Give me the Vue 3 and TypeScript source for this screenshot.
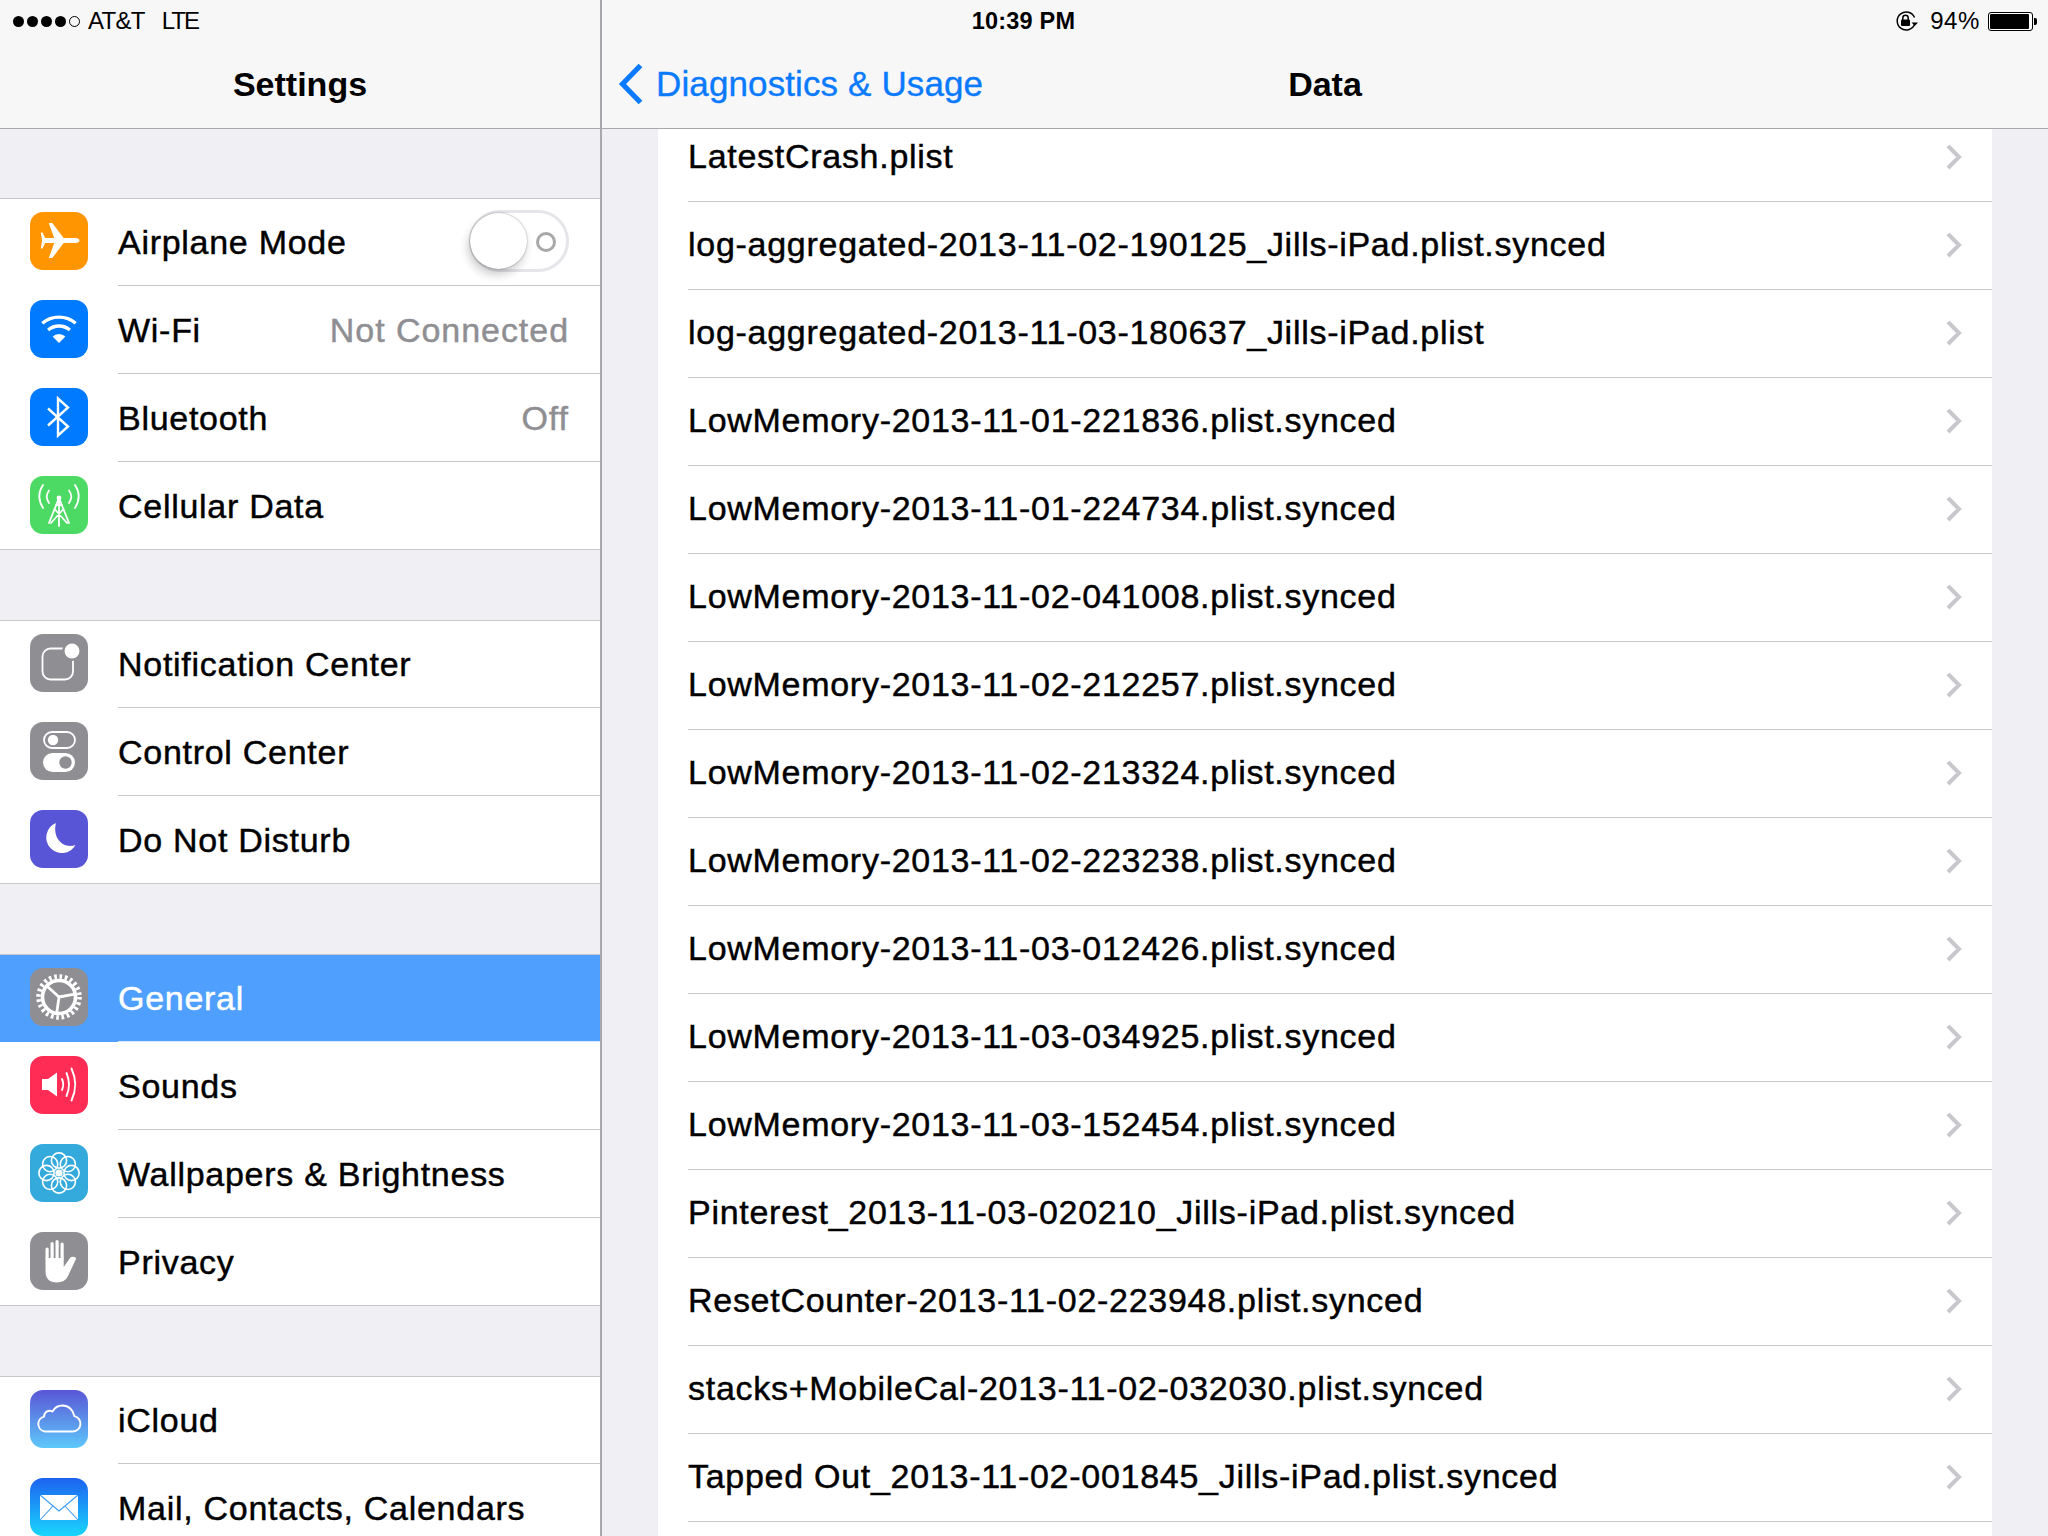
<script setup lang="ts">
interface Row {
  id: string
  label: string
  value?: string
  toggle?: boolean
  selected?: boolean
}

const groups: Row[][] = [
  [
    { id: 'airplane', label: 'Airplane Mode', toggle: true },
    { id: 'wifi', label: 'Wi-Fi', value: 'Not Connected' },
    { id: 'bluetooth', label: 'Bluetooth', value: 'Off' },
    { id: 'cellular', label: 'Cellular Data' },
  ],
  [
    { id: 'notification', label: 'Notification Center' },
    { id: 'control', label: 'Control Center' },
    { id: 'dnd', label: 'Do Not Disturb' },
  ],
  [
    { id: 'general', label: 'General', selected: true },
    { id: 'sounds', label: 'Sounds' },
    { id: 'wallpaper', label: 'Wallpapers & Brightness' },
    { id: 'privacy', label: 'Privacy' },
  ],
  [
    { id: 'icloud', label: 'iCloud' },
    { id: 'mail', label: 'Mail, Contacts, Calendars' },
  ],
]

const files: string[] = [
  'LatestCrash.plist',
  'log-aggregated-2013-11-02-190125_Jills-iPad.plist.synced',
  'log-aggregated-2013-11-03-180637_Jills-iPad.plist',
  'LowMemory-2013-11-01-221836.plist.synced',
  'LowMemory-2013-11-01-224734.plist.synced',
  'LowMemory-2013-11-02-041008.plist.synced',
  'LowMemory-2013-11-02-212257.plist.synced',
  'LowMemory-2013-11-02-213324.plist.synced',
  'LowMemory-2013-11-02-223238.plist.synced',
  'LowMemory-2013-11-03-012426.plist.synced',
  'LowMemory-2013-11-03-034925.plist.synced',
  'LowMemory-2013-11-03-152454.plist.synced',
  'Pinterest_2013-11-03-020210_Jills-iPad.plist.synced',
  'ResetCounter-2013-11-02-223948.plist.synced',
  'stacks+MobileCal-2013-11-02-032030.plist.synced',
  'Tapped Out_2013-11-02-001845_Jills-iPad.plist.synced',
]

const petals = [0, 45, 90, 135, 180, 225, 270, 315]
const spokes = [-48, 80, 188]
</script>

<template>
  <div class="screen">
    <div class="status">
      <div class="status-left">
        <span class="dots">
          <i class="dot"></i><i class="dot"></i><i class="dot"></i><i class="dot"></i><i class="dot empty"></i>
        </span>
        <span class="carrier">AT&amp;T</span>
        <span class="network">LTE</span>
      </div>
      <div class="time">10:39 PM</div>
      <div class="status-right">
        <svg class="lock" width="24" height="20" viewBox="0 0 24 20">
          <path d="M19.5 6.5A9 9 0 1 0 19.5 13.5" fill="none" stroke="#000" stroke-width="1.5" />
          <path d="M16.5 11.5h6.5l-3.2 3.6z" fill="#000" />
          <rect x="6" y="8.5" width="9" height="6.5" rx="1" fill="#000" />
          <path d="M7.8 9V7a2.7 2.7 0 0 1 5.4 0v2" fill="none" stroke="#000" stroke-width="1.5" />
        </svg>
        <span class="pct">94%</span>
        <span class="battery"><i class="battery-fill"></i></span>
        <i class="nub"></i>
      </div>
    </div>

    <aside class="master">
      <header class="nav nav-master"><h1 class="title">Settings</h1></header>
      <div class="master-scroll">
        <section v-for="(group, g) in groups" :key="g" class="group">
          <div v-for="row in group" :key="row.id" class="row" :class="{ selected: row.selected }">
            <span class="icon" :class="'icon-' + row.id">
              <svg width="58" height="58" viewBox="0 0 58 58">
                <template v-if="row.id === 'airplane'">
                  <path d="M49.5 28.5c0-1.4-1.8-2.4-4-2.4H33.6L22.3 11h-3.5l5.4 15.1h-9l-2.7-5.7h-1.7l1.3 8.1-1.3 8.1h1.7l2.7-5.7h9L18.8 46h3.5l11.3-15.1h11.9c2.2 0 4-1 4-2.4z" fill="#fff" />
                </template>
                <template v-else-if="row.id === 'wifi'">
                  <path d="M12.3 23.2A26 26 0 0 1 45.7 23.2" fill="none" stroke="#fff" stroke-width="3.4" />
                  <path d="M18.1 30A17 17 0 0 1 39.9 30" fill="none" stroke="#fff" stroke-width="3.4" />
                  <path d="M29 43L22.6 36.6A9 9 0 0 1 35.4 36.6Z" fill="#fff" />
                </template>
                <template v-else-if="row.id === 'bluetooth'">
                  <path d="M18 20.5L38 38.5 28 47.5V10.5L38 19.5 18 37.5" fill="none" stroke="#fff" stroke-width="2.4" />
                </template>
                <template v-else-if="row.id === 'cellular'">
                  <g fill="none" stroke="#fff" stroke-width="1.8" stroke-linecap="round">
                    <path d="M13 9Q5.5 20 13 32M45 9Q52.5 20 45 32" />
                    <path d="M19 14.5Q14.5 20.5 19 27M39 14.5Q43.5 20.5 39 27" />
                    <path d="M29 22L19 47M29 22L39 47M29 22V50M24.5 33L37 47M33.5 33L21 47M26 29H32" />
                  </g>
                  <circle cx="29" cy="22" r="2.4" fill="#fff" />
                </template>
                <template v-else-if="row.id === 'notification'">
                  <rect x="12.5" y="14.5" width="30.5" height="31" rx="8" fill="none" stroke="#fff" stroke-width="1.8" />
                  <circle cx="42" cy="17" r="10" fill="#8e8e93" />
                  <circle cx="42" cy="17" r="7.5" fill="#fff" />
                </template>
                <template v-else-if="row.id === 'control'">
                  <rect x="14" y="10" width="31" height="16" rx="8" fill="none" stroke="#fff" stroke-width="1.8" />
                  <circle cx="23" cy="18" r="5.2" fill="#fff" />
                  <rect x="13" y="31" width="32" height="19" rx="9.5" fill="#fff" />
                  <circle cx="35.5" cy="40.5" r="6.2" fill="#8e8e93" />
                </template>
                <template v-else-if="row.id === 'dnd'">
                  <path d="M26 13A15.6 15.6 0 1 0 45.5 35C33.5 39.5 22 28 26 13Z" fill="#fff" />
                </template>
                <template v-else-if="row.id === 'general'">
                  <circle cx="29" cy="29" r="20.5" fill="none" stroke="#fff" stroke-width="4.6" stroke-dasharray="2.68 2.68" />
                  <circle cx="29" cy="29" r="16.5" fill="none" stroke="#fff" stroke-width="3.6" />
                  <line v-for="a in spokes" :key="a" x1="29" y1="29" x2="29" y2="13" stroke="#fff" stroke-width="2.8" :transform="`rotate(${a} 29 29)`" />
                </template>
                <template v-else-if="row.id === 'sounds'">
                  <path d="M12 23H18L27 16.5V40.5L18 34H12Z" fill="#fff" />
                  <g fill="none" stroke="#fff" stroke-width="1.9" stroke-linecap="round">
                    <path d="M32 23Q34.5 28.5 32 34" />
                    <path d="M36.5 17Q41.5 28.5 36.5 40" />
                    <path d="M41.5 12.5Q49 28.5 41.5 44.5" />
                  </g>
                </template>
                <template v-else-if="row.id === 'wallpaper'">
                  <g fill="none" stroke="#fff" stroke-width="1.6">
                    <circle v-for="a in petals" :key="a" cx="29" cy="16.5" r="7.6" :transform="`rotate(${a} 29 29)`" />
                  </g>
                  <circle cx="29" cy="29" r="3.6" fill="#fff" />
                </template>
                <template v-else-if="row.id === 'privacy'">
                  <path d="M15.5 27V17a1.6 1.6 0 0 1 3.2 0V27zM20.5 27V11.5a1.6 1.6 0 0 1 3.2 0V27zM25.5 27V9.5a1.6 1.6 0 0 1 3.2 0V27zM30.5 27V12a1.6 1.6 0 0 1 3.2 0V27z" fill="#fff" />
                  <path d="M15.5 26H33.7V35L40 26Q42 24 45.5 25.5 46.5 26.5 45.5 28L38 44Q35 50.5 27 50.5 15.5 50.5 15.5 39Z" fill="#fff" />
                </template>
                <template v-else-if="row.id === 'icloud'">
                  <path d="M15 41.5H43a7.8 7.8 0 0 0 1.4-15.4C43.2 20 38.5 15.5 32.5 15.5 27.8 15.5 24.5 18 22.5 21.5 19 19.5 14.3 21.5 14 26.6A7.6 7.6 0 0 0 15 41.5Z" fill="none" stroke="#fff" stroke-width="1.9" />
                </template>
                <template v-else-if="row.id === 'mail'">
                  <rect x="10" y="17" width="38" height="25" fill="#fff" />
                  <path d="M10 17L29 33 48 17M10 42L23 28M48 42L35 28" fill="none" stroke="#3a9cf8" stroke-width="1.1" />
                </template>
              </svg>
            </span>
            <div class="row-body">
              <span class="label">{{ row.label }}</span>
              <span v-if="row.value" class="value">{{ row.value }}</span>
              <span v-if="row.toggle" class="switch">
                <i class="switch-off"></i>
                <i class="knob"></i>
              </span>
            </div>
          </div>
        </section>
      </div>
    </aside>

    <main class="detail">
      <header class="nav nav-detail">
        <div class="back">
          <svg class="back-chevron" width="26" height="42" viewBox="0 0 26 42">
            <path d="M22.5 2.5L4.5 21 22.5 39.5" fill="none" stroke="#0a7aff" stroke-width="5.2" />
          </svg>
          <span class="back-text">Diagnostics &amp; Usage</span>
        </div>
        <h1 class="title">Data</h1>
        <div></div>
      </header>
      <div class="detail-scroll">
        <ul class="files">
          <li v-for="file in files" :key="file" class="file">
            <span class="file-name">{{ file }}</span>
            <svg class="chevron" width="18" height="26" viewBox="0 0 18 26">
              <path d="M3 2L14 13 3 24" fill="none" stroke="#c7c7cc" stroke-width="4" />
            </svg>
          </li>
          <li class="file"></li>
        </ul>
      </div>
    </main>
  </div>
</template>

<style scoped>
.screen {
  position: relative;
  display: flex;
  width: 2048px;
  height: 1536px;
  overflow: hidden;
  background: #efeff4;
  color: #000;
  font-family: "Liberation Sans", Arial, sans-serif;
}
.status {
  position: absolute;
  inset: 0 0 auto 0;
  height: 42px;
  display: grid;
  grid-template-columns: 1fr auto 1fr;
  align-items: center;
  font-size: 24px;
}
.status-left {
  display: flex;
  align-items: center;
  padding-left: 13px;
}
.dots {
  display: flex;
  gap: 3px;
  margin-right: 8px;
}
.dot {
  width: 11px;
  height: 11px;
  border-radius: 50%;
  background: #000;
}
.dot.empty {
  background: transparent;
  border: 1px solid #000;
  box-sizing: border-box;
}
.carrier {
  letter-spacing: -0.7px;
}
.network {
  margin-left: 17px;
  letter-spacing: -2px;
}
.time {
  font-weight: 700;
  font-size: 23.5px;
  letter-spacing: 0.2px;
  padding-right: 1px;
}
.status-right {
  display: flex;
  align-items: center;
  justify-content: flex-end;
  padding-right: 11px;
}
.pct {
  margin-left: 11px;
  font-size: 24px;
  letter-spacing: 0.6px;
}
.battery {
  display: block;
  width: 45px;
  height: 19px;
  margin-left: 8px;
  box-sizing: border-box;
  border: 1px solid #000;
  border-radius: 3px;
  padding: 1px;
  background: #fff;
}
.battery-fill {
  display: block;
  height: 100%;
  width: 94%;
  background: #000;
  border-radius: 1px;
}
.nub {
  display: block;
  width: 3px;
  height: 7px;
  margin-left: 1px;
  background: #000;
  border-radius: 0 2px 2px 0;
}

.nav {
  height: 129px;
  flex: none;
  box-sizing: border-box;
  padding-top: 40px;
  background: #f7f7f7;
  border-bottom: 1px solid #a9a9ac;
}
.nav-master {
  display: flex;
  align-items: center;
  justify-content: center;
}
.nav-detail {
  display: grid;
  grid-template-columns: 1fr auto 1fr;
  align-items: center;
}
.title {
  margin: 0;
  font-size: 34px;
  font-weight: 700;
}
.back {
  display: flex;
  align-items: center;
  padding-left: 16px;
  color: #0a7aff;
  font-size: 35px;
  letter-spacing: 0.12px;
  -webkit-text-stroke: 0.35px #0a7aff;
}
.back-chevron {
  margin-right: 12px;
}

.master {
  width: 600px;
  flex: none;
  display: flex;
  flex-direction: column;
  border-right: 2px solid #a7a7ac;
}
.master-scroll {
  flex: 1;
  overflow: hidden;
  padding-top: 69px;
}
.group {
  background: #fff;
  border-top: 1px solid #c8c7cc;
  border-bottom: 1px solid #c8c7cc;
  margin-bottom: 70px;
}
.row {
  height: 88px;
  box-sizing: border-box;
  display: flex;
  align-items: center;
  padding-left: 30px;
  font-size: 34px;
  letter-spacing: 0.72px;
  -webkit-text-stroke: 0.45px currentColor;
}
.row:first-child {
  height: 86px;
  padding-bottom: 2px;
}
.label,
.value {
  padding-top: 2px;
}
.icon {
  width: 58px;
  height: 58px;
  flex: none;
  border-radius: 13px;
  overflow: hidden;
  display: block;
}
.icon svg {
  display: block;
}
.icon-airplane { background: #ff9500; }
.icon-wifi, .icon-bluetooth { background: #007aff; }
.icon-cellular { background: #4cd964; }
.icon-notification, .icon-control, .icon-general, .icon-privacy { background: #8e8e93; }
.icon-dnd { background: #5856d6; }
.icon-sounds { background: #ff2d55; }
.icon-wallpaper { background: #34aadc; }
.icon-icloud { background: linear-gradient(#5a56d6, #5ec8fb); }
.icon-mail { background: linear-gradient(#1d62f0, #19d6fd); }

.row-body {
  flex: 1;
  align-self: stretch;
  min-width: 0;
  margin-left: 30px;
  padding-right: 31px;
  display: flex;
  align-items: center;
  justify-content: space-between;
}
.row + .row .row-body {
  border-top: 1px solid #c8c7cc;
}
.value {
  color: #8e8e93;
  letter-spacing: 0.95px;
}
.row.selected {
  background: #4f9fff;
  color: #fff;
  box-shadow: 0 1px 0 #4f9fff;
}
.row.selected + .row .row-body {
  border-top-color: #d6e6fb;
}
.switch {
  position: relative;
  display: block;
  width: 100px;
  height: 62px;
  box-sizing: border-box;
  border: 3px solid #e5e5ea;
  border-radius: 31px;
}
.knob {
  position: absolute;
  left: -2px;
  top: 0;
  width: 57px;
  height: 56px;
  border-radius: 50%;
  background: #fff;
  box-shadow: -2px 6px 10px rgba(0, 0, 0, 0.2), 0 0 2px rgba(0, 0, 0, 0.4);
}
.switch-off {
  position: absolute;
  right: 10px;
  top: 19px;
  width: 20px;
  height: 20px;
  box-sizing: border-box;
  border: 3px solid #a8a8ab;
  border-radius: 50%;
}

.detail {
  flex: 1;
  min-width: 0;
  display: flex;
  flex-direction: column;
}
.detail-scroll {
  flex: 1;
  overflow: hidden;
  padding: 0 56px;
}
.files {
  list-style: none;
  margin: -15px 0 0;
  padding: 0 0 0 30px;
  background: #fff;
}
.file {
  height: 88px;
  box-sizing: border-box;
  display: flex;
  align-items: center;
  justify-content: space-between;
  padding-right: 29px;
  padding-bottom: 2px;
  border-bottom: 1px solid #c8c7cc;
  font-size: 34px;
  letter-spacing: 0.72px;
  -webkit-text-stroke: 0.45px #000;
}
.file:last-child {
  border-bottom: none;
}
</style>

<style>
html, body {
  margin: 0;
  padding: 0;
  background: #efeff4;
}
</style>
